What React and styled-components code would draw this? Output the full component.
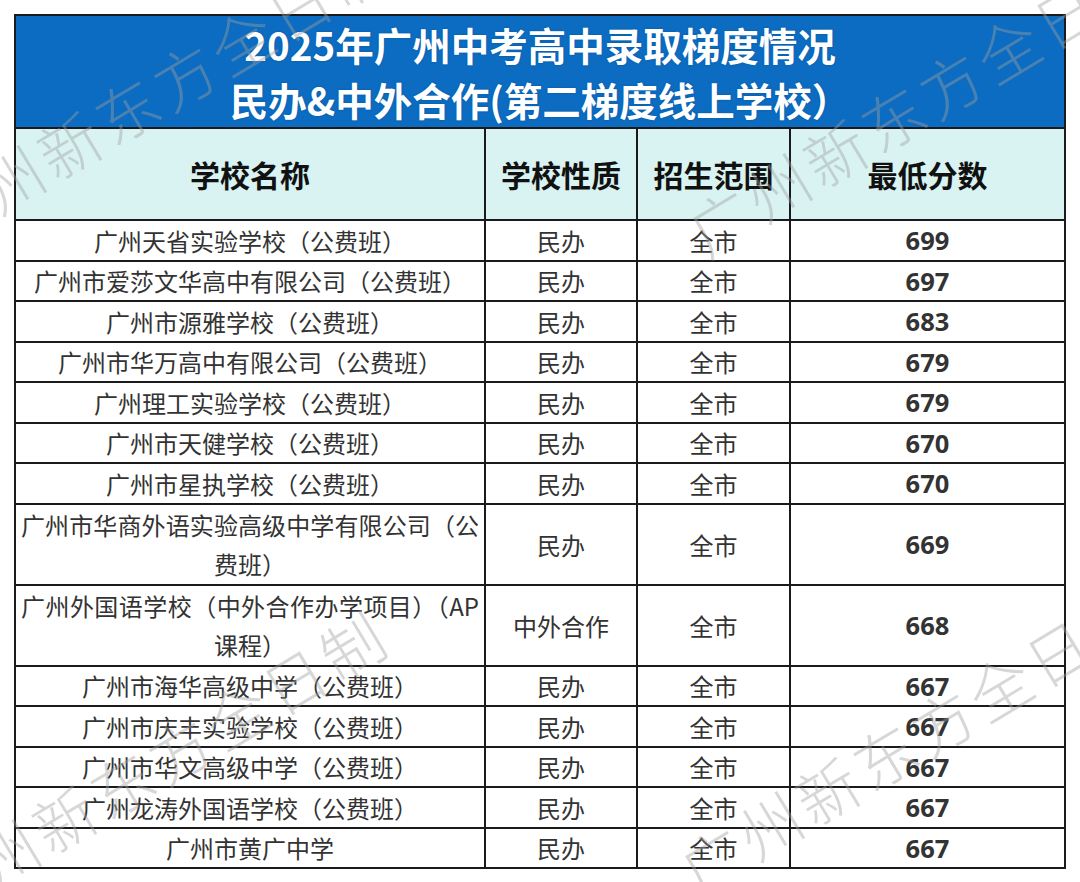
import React from 'react'
import styled, { createGlobalStyle } from 'styled-components'

const GlobalStyle = createGlobalStyle`
    body {
        margin: 0;
        background: #fff;
        font-family: 'Noto Sans CJK SC', 'Noto Sans', sans-serif;
    }
`;

const rows = [
    ['广州天省实验学校（公费班）', '民办', '全市', '699'],
    ['广州市爱莎文华高中有限公司（公费班）', '民办', '全市', '697'],
    ['广州市源雅学校（公费班）', '民办', '全市', '683'],
    ['广州市华万高中有限公司（公费班）', '民办', '全市', '679'],
    ['广州理工实验学校（公费班）', '民办', '全市', '679'],
    ['广州市天健学校（公费班）', '民办', '全市', '670'],
    ['广州市星执学校（公费班）', '民办', '全市', '670'],
    [['广州市华商外语实验高级中学有限公司（公', '费班）'], '民办', '全市', '669'],
    [['广州外国语学校（中外合作办学项目）（AP', '课程）'], '中外合作', '全市', '668'],
    ['广州市海华高级中学（公费班）', '民办', '全市', '667'],
    ['广州市庆丰实验学校（公费班）', '民办', '全市', '667'],
    ['广州市华文高级中学（公费班）', '民办', '全市', '667'],
    ['广州龙涛外国语学校（公费班）', '民办', '全市', '667'],
    ['广州市黄广中学', '民办', '全市', '667'],
]

// watermark anchors: centre of the first glyph
const marks = [
    { x: -42, y: 228 },
    { x: 724, y: 236 },
    { x: -47, y: 902 },
    { x: 716, y: 874 },
]

function App() {
    return (
        <Page>
            <GlobalStyle />
            <Table>
                <Title>
                    <div>2025年广州中考高中录取梯度情况</div>
                    <div>民办&amp;中外合作(第二梯度线上学校）</div>
                </Title>
                <Head>学校名称</Head>
                <Head>学校性质</Head>
                <Head>招生范围</Head>
                <Head>最低分数</Head>
                {rows.map((r, i) => {
                    const tall = Array.isArray(r[0])
                    return (
                        <React.Fragment key={i}>
                            <Cell $tall={tall}>
                                {tall ? (
                                    <Name>
                                        <Line $fill>{r[0][0]}</Line>
                                        <Line>{r[0][1]}</Line>
                                    </Name>
                                ) : r[0]}
                            </Cell>
                            <Cell $tall={tall}>{r[1]}</Cell>
                            <Cell $tall={tall}>{r[2]}</Cell>
                            <Cell $tall={tall} $num>{r[3]}</Cell>
                        </React.Fragment>
                    )
                })}
            </Table>
            {marks.map((m, i) => (
                <Watermark key={i} style={{ left: m.x - 31, top: m.y - 31 }}>
                    广州新东方全日制
                </Watermark>
            ))}
        </Page>
    )
}

const Page = styled.div`
    position: relative;
    width: 1080px;
    height: 882px;
    overflow: hidden;
    padding: 14px;
    box-sizing: border-box;
`;
const Table = styled.div`
    display: grid;
    grid-template-columns: 468px 150px 151px 273px;
    gap: 2px;
    width: fit-content;
    background: #1a1a1a;
    border: 2px solid #1a1a1a;
`;
const Title = styled.div`
    grid-column: 1 / -1;
    height: 111px;
    background: #0b6cc1;
    color: #fff;
    font-family: 'Noto Sans CJK SC', sans-serif;
    font-weight: 700;
    font-size: 38.5px;
    line-height: 55px;
    text-align: center;
    display: flex;
    flex-direction: column;
    justify-content: center;
    text-shadow: 0 0 2px rgba(0, 40, 90, 0.35);
`;
const Head = styled.div`
    height: 90px;
    background: #d8f3f1;
    color: #111;
    font-weight: 700;
    font-size: 30px;
    display: flex;
    align-items: center;
    justify-content: center;
`;
const Cell = styled.div`
    height: ${p => (p.$tall ? '79px' : '38.5px')};
    background: #fff;
    color: #333;
    font-family: ${p => (p.$num ? "'Noto Sans', 'Open Sans', sans-serif" : "'Noto Sans CJK SC', sans-serif")};
    font-weight: ${p => (p.$num ? 700 : 400)};
    font-size: ${p => (p.$num ? '25.5px' : '24px')};
    display: flex;
    align-items: center;
    justify-content: center;
    white-space: nowrap;
`;
const Name = styled.div`
    width: 100%;
    padding: 0 5px;
    box-sizing: border-box;
    line-height: 39px;
`;
const Line = styled.div`
    text-align: center;
    text-align-last: ${p => (p.$fill ? 'justify' : 'center')};
`;
const Watermark = styled.span`
    position: absolute;
    font-family: 'Noto Sans CJK SC', sans-serif;
    font-weight: 300;
    font-size: 62px;
    line-height: 62px;
    letter-spacing: 5px;
    white-space: nowrap;
    color: rgba(160, 160, 160, 0.42);
    transform-origin: 0 50%;
    transform: rotate(-31deg);
    pointer-events: none;
`;

export default App
